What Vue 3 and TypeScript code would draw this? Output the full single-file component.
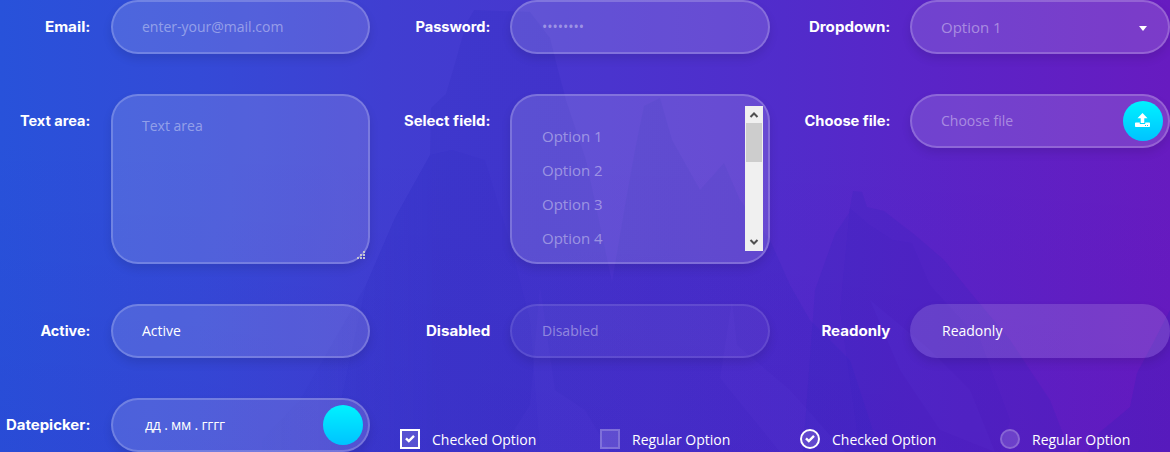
<script setup lang="ts">
interface Field {
  kind: 'text' | 'select' | 'area' | 'list' | 'file' | 'date' | 'disabled' | 'readonly'
  label: string
  width: number
  text: string
  filled?: boolean
}

const rows: Field[][] = [
  [
    { kind: 'text', label: 'Email:', width: 45.5, text: 'enter-your@mail.com' },
    { kind: 'text', label: 'Password:', width: 75, text: '••••••••' },
    { kind: 'select', label: 'Dropdown:', width: 81.5, text: 'Option 1' },
  ],
  [
    { kind: 'area', label: 'Text area:', width: 70.5, text: 'Text area' },
    { kind: 'list', label: 'Select field:', width: 86.5, text: '' },
    { kind: 'file', label: 'Choose file:', width: 86, text: 'Choose file' },
  ],
  [
    { kind: 'text', label: 'Active:', width: 50, text: 'Active', filled: true },
    { kind: 'disabled', label: 'Disabled', width: 64.5, text: 'Disabled' },
    { kind: 'readonly', label: 'Readonly', width: 69, text: 'Readonly', filled: true },
  ],
]
const date: Field = { kind: 'date', label: 'Datepicker:', width: 84.5, text: 'дд . мм . гггг', filled: true }
const options = ['Option 1', 'Option 2', 'Option 3', 'Option 4']
const checks = [
  { text: 'Checked Option', on: true, round: false },
  { text: 'Regular Option', on: false, round: false },
  { text: 'Checked Option', on: true, round: true },
  { text: 'Regular Option', on: false, round: true },
]
</script>

<template>
  <main class="page">
    <svg class="scenery" viewBox="0 0 1170 452" aria-hidden="true">
      <defs>
        <linearGradient id="fade" gradientUnits="userSpaceOnUse" x1="260" y1="0" x2="440" y2="0">
          <stop offset="0" stop-color="#2423b6" stop-opacity="0" />
          <stop offset="1" stop-color="#2423b6" />
        </linearGradient>
      </defs>
      <g fill="#2423b6">
        <path fill="url(#fade)" opacity=".15" d="M456 60 466 24 474 10 530 12 550 38 558 70 566 100 586 160 612 282 626 200 635 150 644 106 660 98 672 140 700 190 724 163 740 200 770 240 790 285 810 320 850 360 880 452H250L300 400 340 330 366 285 395 218 430 155 431 108 446 94Z" />
        <path opacity=".04" d="M366 285 395 218 430 155 452 150 485 160 508 236 530 320 540 452H330Z" />
        <path opacity=".14" d="M803 452 815 290 835 234 849 213 853 191 862 192 867 207 884 211 915 235 944 260 975 298 1010 340 1050 400 1070 452Z" />
        <path opacity=".04" d="M850 208 870 225 893 240 912 243 930 285 980 340 1010 420 1000 452H860L840 310Z" />
        <path opacity=".18" d="M1170 310 1152 345 1137 373 1130 407 1100 432 1088 452H1170Z" />
      </g>
      <g fill="#7a55ef" opacity=".05">
        <path d="M540 286 555 390 585 410 610 452H500L530 405Z" />
        <path d="M732 300 737 345 790 390 845 452H780L720 378Z" />
        <path d="M870 300 930 350 970 390 995 452 940 430 900 370Z" />
      </g>
    </svg>

    <form class="form" @submit.prevent>
      <div v-for="(row, r) in rows" :key="r" class="row">
        <div v-for="f in row" :key="f.label" class="group">
          <svg class="label" width="90" height="54">
            <text x="90.4" y="32" text-anchor="end" :textLength="f.width" lengthAdjust="spacingAndGlyphs">{{ f.label }}</text>
          </svg>
          <div class="field" :class="[f.kind, { filled: f.filled }]">
            <template v-if="f.kind === 'list'">
              <ul class="options">
                <li v-for="o in options" :key="o">{{ o }}</li>
              </ul>
              <div class="scrollbar">
                <svg width="17" height="17"><path d="M5.5 11 9 7.5 12.5 11" /></svg>
                <i class="thumb"></i>
                <svg width="17" height="17"><path d="M5.5 6 9 9.5 12.5 6" /></svg>
              </div>
            </template>
            <span v-else>{{ f.text }}</span>
            <i v-if="f.kind === 'select'" class="caret"></i>
            <b v-if="f.kind === 'file'" class="action">
              <svg width="15" height="15" viewBox="0 0 15 15">
                <path fill="#fff" d="M7.5 0 12.5 5.2H9.3V10H5.7V5.2H2.5Z" />
                <path fill="#fff" fill-rule="evenodd" d="M.8 9.5H4.8V11H10.2V9.5H14.2Q15 9.5 15 10.3V13.3Q15 14 14.2 14H.8Q0 14 0 13.3V10.3Q0 9.5.8 9.5ZM10 12V13H11V12ZM12 12V13H13V12Z" />
              </svg>
            </b>
            <svg v-if="f.kind === 'area'" class="grip" width="9" height="9" fill="#c4c4d0">
              <path d="M7 0h2v2H7zM4 3h2v2H4zM7 3h2v2H7zM1 6h2v2H1zM4 6h2v2H4zM7 6h2v2H7z" />
            </svg>
          </div>
        </div>
      </div>

      <div class="row">
        <div class="group">
          <svg class="label" width="90" height="54">
            <text x="90.4" y="32" text-anchor="end" :textLength="date.width" lengthAdjust="spacingAndGlyphs">{{ date.label }}</text>
          </svg>
          <div class="field date filled">
            <span>{{ date.text }}</span>
            <b class="action"></b>
          </div>
        </div>
        <div class="checks">
          <label v-for="(c, i) in checks" :key="i" class="check">
            <i class="box" :class="{ on: c.on, round: c.round }">
              <svg v-if="c.on" width="10" height="8" viewBox="0 0 10 8">
                <path d="M1 3.3 3.8 6 9 .9" fill="none" stroke="#fff" stroke-width="2.4" />
              </svg>
            </i>
            <span>{{ c.text }}</span>
          </label>
        </div>
      </div>
    </form>
  </main>
</template>

<style>
body {
  margin: 0;
  overflow: hidden;
}
</style>

<style scoped>
* {
  box-sizing: border-box;
}
.page {
  position: relative;
  width: 1170px;
  height: 452px;
  overflow: hidden;
  font: 14px/20px "Open Sans", sans-serif;
  color: #fff;
  background:
    linear-gradient(180deg, rgba(50, 0, 170, 0) 30%, rgba(50, 0, 170, 0.08) 100%),
    linear-gradient(90deg, #2852da 0%, #344ad7 17%, #403ed1 33%, #4a34ce 52%, #512ccb 67%, #5a24c7 80%, #671bc0 100%);
}
.scenery {
  position: absolute;
  inset: 0;
  width: 1170px;
  height: 452px;
  filter: blur(0.7px);
}
.form {
  position: relative;
  display: flex;
  flex-direction: column;
  gap: 40px;
}
.row {
  display: flex;
  gap: 30px;
}
.group {
  display: flex;
  align-items: flex-start;
  gap: 20px;
  width: 370px;
}
.label {
  flex: none;
  overflow: visible;
  font: 750 14px Inter, sans-serif;
  fill: #fff;
}
.field {
  position: relative;
  display: flex;
  align-items: center;
  flex: none;
  width: 260px;
  height: 54px;
  padding: 0 5px 0 30px;
  border: 2px solid rgba(255, 255, 255, 0.2);
  border-radius: 27px;
  background: rgba(255, 255, 255, 0.14);
  box-shadow: 0 5px 10px rgba(0, 0, 0, 0.1);
  color: rgba(255, 255, 255, 0.4);
}
.group:first-child .field {
  width: 259.5px;
  margin-left: 0.5px;
  padding-left: 29.5px;
}
.group:first-child .date {
  padding-left: 32.5px;
}
.field.filled {
  color: #fff;
}
.select {
  justify-content: space-between;
  padding: 0 21px 0 29px;
  font-size: 15px;
}
.caret {
  margin-top: 3px;
  border: 4px solid transparent;
  border-top: 5px solid #fff;
  border-bottom: 0;
}
.area,
.list {
  height: 170px;
}
.area {
  align-items: flex-start;
  padding-top: 20px;
}
.grip {
  position: absolute;
  right: 3px;
  bottom: 2px;
}
.list {
  align-items: flex-start;
  justify-content: space-between;
  padding-top: 10px;
}
.options {
  margin: 13px 0 0;
  padding: 0;
  list-style: none;
  font-size: 15px;
  line-height: 34px;
}
.scrollbar {
  display: flex;
  flex-direction: column;
  width: 18px;
  height: 145px;
  background: #f0f0f0;
}
.scrollbar svg {
  flex: none;
  fill: none;
  stroke: #505050;
  stroke-width: 2;
}
.scrollbar svg:last-child {
  margin-top: auto;
}
.thumb {
  height: 39px;
  margin: 0 1px;
  background: #cdcdcd;
}
.file {
  justify-content: space-between;
  padding-left: 29px;
}
.action {
  display: flex;
  align-items: center;
  justify-content: center;
  width: 40px;
  height: 40px;
  padding: 0 1px 1px 0;
  border-radius: 50%;
  background: linear-gradient(180deg, #00f2ff, #00c3ff);
}
.date {
  justify-content: space-between;
}
.date span {
  letter-spacing: -0.2px;
}
.disabled {
  border-color: rgba(255, 255, 255, 0.1);
  background: rgba(255, 255, 255, 0.05);
}
.readonly {
  border-color: transparent;
}
.checks {
  display: flex;
  align-items: flex-start;
  padding-top: 31px;
}
.check {
  display: flex;
  align-items: center;
  gap: 12px;
  width: 200px;
  height: 20px;
}
.check span {
  padding-top: 2px;
}
.box {
  display: flex;
  align-items: center;
  justify-content: center;
  width: 20px;
  height: 20px;
  padding-bottom: 1px;
  border: 2px solid rgba(255, 255, 255, 0.2);
  background: rgba(255, 255, 255, 0.15);
}
.box.on {
  border-color: #fff;
}
.box.round {
  border-radius: 50%;
}
</style>
